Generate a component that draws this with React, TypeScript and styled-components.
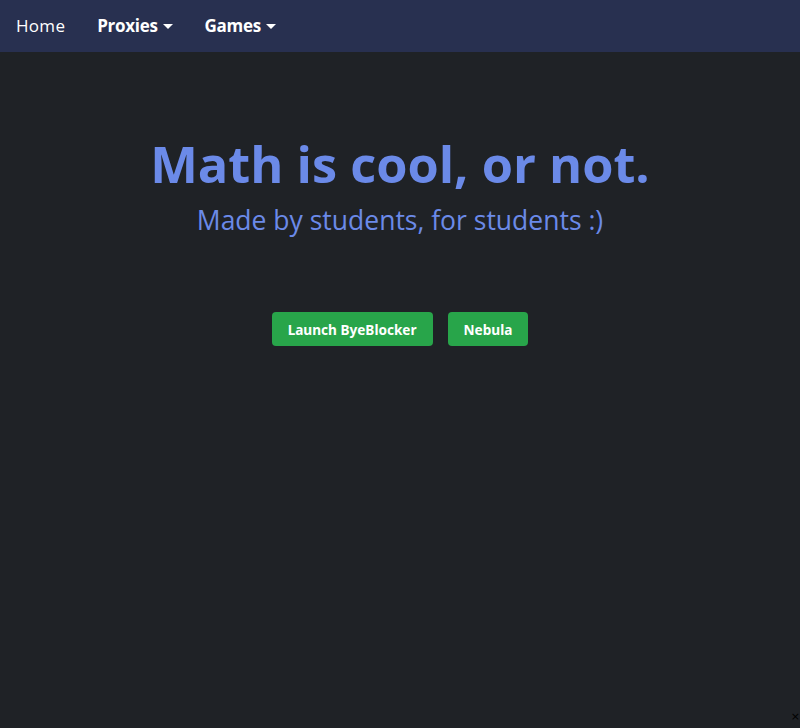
import React from "react";
import styled, { createGlobalStyle } from "styled-components";

const Global = createGlobalStyle`
  html, body { margin: 0; padding: 0; background: #1f2226; }
  body { font-family: "Open Sans", "Noto Sans", sans-serif; }
`;

const Page = styled.div`
  min-height: 728px;
  background: #1f2226;
  display: flex;
  flex-direction: column;
  position: relative;
`;

const NavBar = styled.nav`
  height: 52px;
  background: #283050;
  display: flex;
  align-items: center;
  padding: 0 16px 2px;
  box-sizing: border-box;
  gap: 32px;
`;

const NavItem = styled.a<{ $bold?: boolean }>`
  color: #ffffff;
  font-family: "Open Sans", sans-serif;
  font-size: 17px;
  font-weight: ${(p) => (p.$bold ? 700 : 400)};
  letter-spacing: ${(p) => (p.$bold ? "-0.3px" : "0.3px")};
  text-decoration: none;
  display: flex;
  align-items: center;
  gap: 5px;
`;

const Caret = styled.span`
  width: 0;
  height: 0;
  border-left: 5px solid transparent;
  border-right: 5px solid transparent;
  border-top: 5px solid #ffffff;
  margin-top: 2px;
`;

const Hero = styled.main`
  display: flex;
  flex-direction: column;
  align-items: center;
  padding-top: 78px;
`;

const Title = styled.h1`
  margin: 0;
  color: #6b8ae8;
  font-family: "Open Sans", sans-serif;
  font-weight: 700;
  font-size: 50.5px;
  line-height: 68px;
`;

const Subtitle = styled.p`
  margin: 4px 0 0;
  color: #6b8ae8;
  font-family: "Open Sans", sans-serif;
  font-weight: 400;
  font-size: 26.5px;
  line-height: 36px;
`;

const Buttons = styled.div`
  display: flex;
  gap: 15px;
  margin-top: 74px;
`;

const Button = styled.button`
  background: #28a54a;
  color: #ffffff;
  border: none;
  border-radius: 4px;
  height: 34px;
  padding: 0 16px;
  font-family: "Noto Sans", sans-serif;
  font-weight: 700;
  font-size: 13.6px;
  cursor: pointer;
`;

const Close = styled.span`
  position: absolute;
  right: 0;
  bottom: 6px;
  color: #000;
  font-family: "DejaVu Sans", sans-serif;
  font-size: 11px;
  line-height: 11px;
`;

export default function App() {
  return (
    <>
      <Global />
      <Page>
        <NavBar>
          <NavItem href="#">Home</NavItem>
          <NavItem href="#" $bold>
            Proxies <Caret />
          </NavItem>
          <NavItem href="#" $bold>
            Games <Caret />
          </NavItem>
        </NavBar>
        <Hero>
          <Title>Math is cool, or not.</Title>
          <Subtitle>Made by students, for students :)</Subtitle>
          <Buttons>
            <Button>Launch ByeBlocker</Button>
            <Button>Nebula</Button>
          </Buttons>
        </Hero>
        <Close>×</Close>
      </Page>
    </>
  );
}
